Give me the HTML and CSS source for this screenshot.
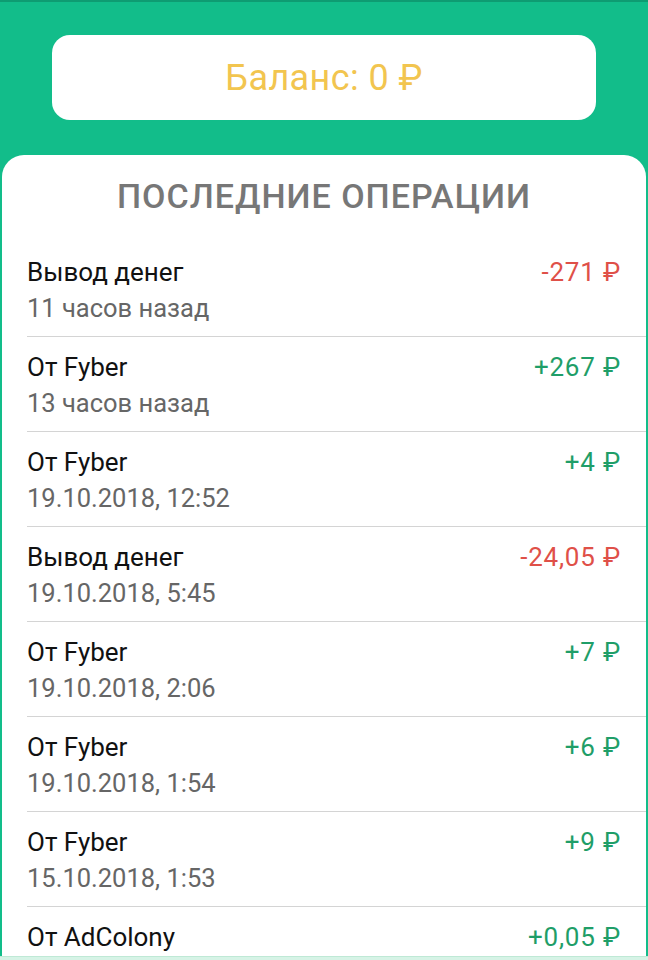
FILE: index.html
```html
<!DOCTYPE html>
<html lang="ru">
<head>
<meta charset="utf-8">
<link rel="stylesheet" href="styles.css">
</head>
<body>
<div class="screen">
  <header class="top">
    <div class="balance">Баланс: 0 ₽</div>
  </header>
  <main class="panel">
    <h1 class="heading">ПОСЛЕДНИЕ ОПЕРАЦИИ</h1>
    <ul class="list">
      <li class="row"><div class="info"><div class="name">Вывод денег</div><div class="time">11 часов назад</div></div><div class="amount neg">-271 ₽</div></li>
      <li class="row"><div class="info"><div class="name">От Fyber</div><div class="time">13 часов назад</div></div><div class="amount pos">+267 ₽</div></li>
      <li class="row"><div class="info"><div class="name">От Fyber</div><div class="time">19.10.2018, 12:52</div></div><div class="amount pos">+4 ₽</div></li>
      <li class="row"><div class="info"><div class="name">Вывод денег</div><div class="time">19.10.2018, 5:45</div></div><div class="amount neg">-24,05 ₽</div></li>
      <li class="row"><div class="info"><div class="name">От Fyber</div><div class="time">19.10.2018, 2:06</div></div><div class="amount pos">+7 ₽</div></li>
      <li class="row"><div class="info"><div class="name">От Fyber</div><div class="time">19.10.2018, 1:54</div></div><div class="amount pos">+6 ₽</div></li>
      <li class="row"><div class="info"><div class="name">От Fyber</div><div class="time">15.10.2018, 1:53</div></div><div class="amount pos">+9 ₽</div></li>
      <li class="row"><div class="info"><div class="name">От AdColony</div></div><div class="amount pos">+0,05 ₽</div></li>
    </ul>
  </main>
  <div class="bottom"></div>
</div>
</body>
</html>
```
FILE: styles.css
```css
* { box-sizing: border-box; margin: 0; padding: 0; }
html, body { width: 648px; height: 960px; overflow: hidden; }
body { font-family: Roboto, "Noto Sans", sans-serif; background: #12bd8a; }
.screen { position: relative; width: 648px; height: 960px; display: flex; flex-direction: column; border-top: 2px solid #0e9c72; }
.top { padding: 33px 52px 35px; }
.balance {
  height: 85px; background: #fff; border-radius: 18px;
  display: flex; align-items: center; justify-content: center;
  color: #f2c54f; font-size: 36px; letter-spacing: 0.4px;
}
.panel {
  flex: 1; margin: 0 2px; background: #fff; border-radius: 22px 22px 0 0;
  overflow: hidden;
}
.heading {
  text-align: center; font-weight: 500; font-size: 34px; color: #777;
  padding-top: 21px; height: 87px; letter-spacing: 1px;
}
.list { list-style: none; margin-left: 25px; }
.row {
  display: flex; justify-content: space-between; align-items: flex-start;
  height: 95px; border-bottom: 1.5px solid #d4d4d4; padding: 14px 25px 0 0;
}
.name { font-size: 26px; color: #111; line-height: 32px; }
.time { font-size: 25.5px; color: #666; line-height: 32px; margin-top: 4px; }
.amount { font-size: 26px; line-height: 32px; letter-spacing: 0.8px; }
.neg { color: #df5048; }
.pos { color: #1f9e68; }
.bottom { position: absolute; left: 0; right: 0; bottom: 0; height: 4px; background: #d6f3e6; border-top: 1px solid #bfe9d6; }
```
